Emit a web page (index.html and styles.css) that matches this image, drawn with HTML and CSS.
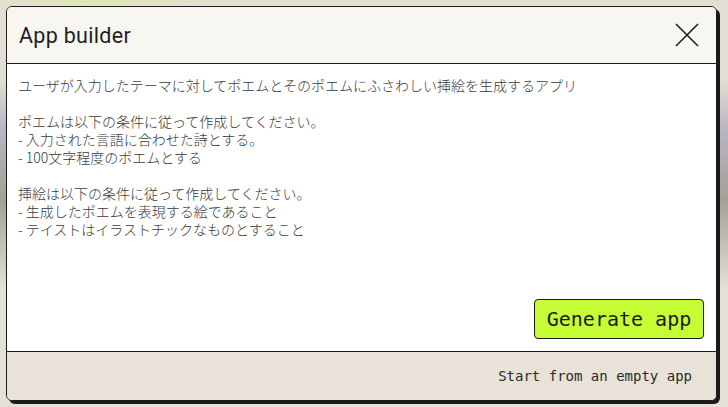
FILE: index.html
```html
<!DOCTYPE html>
<html lang="ja">
<head>
<meta charset="utf-8">
<link rel="stylesheet" href="styles.css">
</head>
<body>
<div class="dialog">
  <div class="header">
    <h1 class="title">App builder</h1>
    <button class="close" aria-label="Close">
      <svg width="24" height="24" viewBox="0 0 24 24"><path d="M1 1 L23 23 M23 1 L1 23" stroke="#1f1f1f" stroke-width="1.6" fill="none"/></svg>
    </button>
  </div>
  <div class="body">
    <div class="prompt">ユーザが入力したテーマに対してポエムとそのポエムにふさわしい挿絵を生成するアプリ

ポエムは以下の条件に従って作成してください。
- 入力された言語に合わせた詩とする。
- 100文字程度のポエムとする

挿絵は以下の条件に従って作成してください。
- 生成したポエムを表現する絵であること
- テイストはイラストチックなものとすること</div>
    <div class="actions">
      <button class="generate">Generate app</button>
    </div>
  </div>
  <div class="footer">
    <span class="empty">Start from an empty app</span>
  </div>
</div>
</body>
</html>
```

FILE: styles.css
```css
html, body {
  margin: 0;
  height: 100%;
}
body {
  padding: 6px;
  box-sizing: border-box;
  background:
    radial-gradient(ellipse 120px 30px at 100px 0px, #dfe6b2 0%, rgba(223,230,178,0) 100%),
    linear-gradient(180deg, rgba(0,0,0,0) 80px, #b9b5c2 130px, #a5a096 200px, #e6e1d7 290px),
    #e3ded4;
  background-repeat: no-repeat;
  background-color: #e3ded4;
  font-family: "Noto Sans CJK JP", "Noto Sans", sans-serif;
  overflow: hidden;
}
.dialog {
  width: 711px;
  height: 395px;
  box-sizing: border-box;
  border: 1px solid #1a1a1a;
  border-radius: 6px;
  box-shadow: 3px 3px 0 #1a1a1a;
  background: #ffffff;
  display: flex;
  flex-direction: column;
  overflow: hidden;
}
.header {
  height: 57px;
  box-sizing: border-box;
  background: #f8f6f1;
  border-bottom: 1px solid #1a1a1a;
  display: flex;
  align-items: center;
  justify-content: space-between;
  padding: 0 17px 0 12px;
}
.title {
  margin: 0;
  font-family: Roboto, "Noto Sans", sans-serif;
  font-weight: 400;
  font-size: 21.5px;
  color: #1f1f1f;
  letter-spacing: 0.3px;
}
.close {
  border: none;
  background: none;
  padding: 0;
  width: 24px;
  height: 24px;
  display: flex;
}
.body {
  flex: 1;
  display: flex;
  flex-direction: column;
  justify-content: space-between;
  padding: 12px 12px 12px 11px;
  background: #ffffff;
}
.prompt {
  white-space: pre-wrap;
  font-size: 14px;
  font-weight: 300;
  line-height: 18px;
  color: #3a3a3a;
}
.actions {
  display: flex;
  justify-content: flex-end;
}
.generate {
  width: 170px;
  height: 40px;
  box-sizing: border-box;
  background: #c6fc33;
  border: 1px solid #1a1a1a;
  border-radius: 4px;
  font-family: "DejaVu Sans Mono", "Liberation Mono", monospace;
  font-size: 20px;
  color: #1a1a1a;
  padding: 0;
}
.footer {
  height: 49px;
  box-sizing: border-box;
  border-top: 1px solid #1a1a1a;
  background: #e8e2d8;
  display: flex;
  align-items: center;
  justify-content: flex-end;
  padding: 0 24px 0 12px;
}
.empty {
  font-family: "DejaVu Sans Mono", "Liberation Mono", monospace;
  font-size: 14px;
  color: #2a2a2a;
}
```
